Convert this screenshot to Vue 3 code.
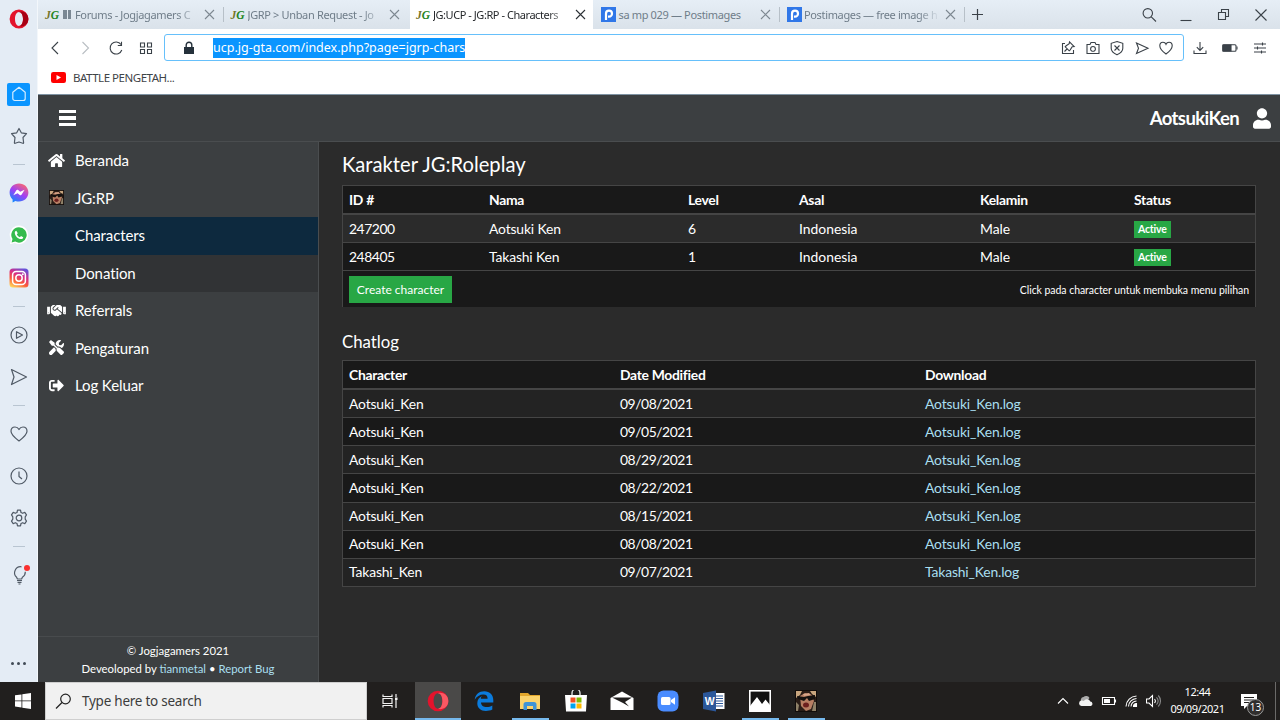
<template>
  <div class="desktop">
    <div class="browser">
      <!-- Opera sidebar -->
      <aside class="rail">
        <div class="rail-logo">
          <svg width="20" height="20" viewBox="0 0 20 20">
            <path fill="#e3132c" fill-rule="evenodd" d="M10 .6a9.400 9.400 0 1 0 0 18.800A9.400 9.400 0 0 0 10 .6zM10 3c2.400 0 4 3 4 7s-1.600 7-4 7-4-3-4-7 1.600-7 4-7z" />
            <path fill="#a70014" d="M10 3c2.400 0 4 3 4 7s-1.600 7-4 7c3.500 1.400 9.400-1 9.400-7S13.500 1.600 10 3z" />
          </svg>
        </div>
        <template v-for="(r, i) in rail" :key="i">
          <div v-if="r === '-'" class="rail-sep"></div>
          <div v-else class="rail-cell">
            <span v-if="r === 'home'" class="rail-home">
              <svg width="16" height="16" viewBox="0 0 16 16" class="line"><path :d="icons.home" /></svg>
            </span>
            <svg v-else-if="r === 'messenger'" width="20" height="20" viewBox="0 0 20 20">
              <defs>
                <linearGradient id="msg" x1="0.2" y1="1" x2="0.8" y2="0">
                  <stop offset="0" stop-color="#0a8cff" /><stop offset="0.5" stop-color="#a040f5" /><stop offset="1" stop-color="#ff6a68" />
                </linearGradient>
              </defs>
              <path fill="url(#msg)" d="M10 .5C4.600 .5 .6 4.400 .6 9.600c0 2.800 1.100 5.100 3 6.800v3l2.800-1.500c1.100.4 2.300.6 3.600.6 5.400 0 9.400-3.900 9.400-9S15.400 .5 10 .5z" />
              <path fill="#fff" d="M4.300 12.200 7.200 7.500c.5-.7 1.300-.8 2-.4l2 1.600 4.400-2-2.900 4.800c-.5.7-1.300.8-2 .4l-2.100-1.600z" />
            </svg>
            <svg v-else-if="r === 'whatsapp'" width="20" height="20" viewBox="0 0 20 20">
              <path fill="#fff" d="M10 .6a9.200 9.200 0 0 0-8 13.800L.9 19.200l4.900-1.200A9.200 9.200 0 1 0 10 .6z" />
              <path fill="#35bb4e" d="M10 2.200a7.700 7.700 0 0 0-6.500 11.800l-.9 3.500 3.600-.9A7.700 7.700 0 1 0 10 2.200z" />
              <path fill="#fff" d="M7.300 5.700c-.9 0-1.600 1-1.500 2.200.3 3.200 3.200 6 6.200 6.200 1.100 0 2.300-.7 2.200-1.900l-2.200-1.100-1.100 1.200c-1.500-.6-2.500-1.600-3.100-3l1-1.100z" />
            </svg>
            <svg v-else-if="r === 'instagram'" width="20" height="20" viewBox="0 0 20 20">
              <defs>
                <linearGradient id="ig" x1="0.2" y1="1" x2="0.7" y2="0">
                  <stop offset="0" stop-color="#ffd35a" /><stop offset="0.35" stop-color="#fa5a38" /><stop offset="0.65" stop-color="#d82d86" /><stop offset="1" stop-color="#6552d8" />
                </linearGradient>
              </defs>
              <rect x="0.5" y="0.5" width="19" height="19" rx="3.5" fill="url(#ig)" />
              <g fill="none" stroke="#fff" stroke-width="1.5">
                <rect x="3.6" y="3.6" width="12.8" height="12.8" rx="3.5" /><circle cx="10" cy="10" r="3.2" />
              </g>
              <circle cx="13.8" cy="6.2" r="1" fill="#fff" />
            </svg>
            <svg v-else width="18" height="18" viewBox="0 0 18 18" class="line"><path :d="icons[r]" /></svg>
            <i v-if="r === 'bulb'" class="rail-dot"></i>
          </div>
        </template>
        <div class="rail-more"><i></i><i></i><i></i></div>
      </aside>

      <div class="window">
        <!-- Tabs -->
        <div class="tabs">
          <div v-for="(t, i) in tabs" :key="i" class="tab" :class="{ active: t.active, sep: t.sep }">
            <span v-if="t.icon === 'jg'" class="fav-jg"><i>J</i><b>G</b></span>
            <svg v-else class="fav-p" width="15" height="15" viewBox="0 0 15 15">
              <rect width="15" height="15" fill="#3077e8" />
              <path d="M5 13V6.700a3 3 0 1 1 3 3H7" fill="none" stroke="#fff" stroke-width="2.2" />
            </svg>
            <span v-if="t.paused" class="bars"><i></i><i></i></span>
            <span class="tab-title" :class="{ fade: t.fade }">{{ t.title }}</span>
            <svg class="tab-x" width="11" height="11" viewBox="0 0 11 11"><path d="M1 1l9 9M10 1l-9 9" /></svg>
          </div>
          <svg class="tab-add" width="11" height="11" viewBox="0 0 11 11"><path d="M5.500 0v11M0 5.500h11" /></svg>
          <div class="win-ctl">
            <svg width="16" height="16" viewBox="0 0 16 16"><circle cx="6.8" cy="6.3" r="4.7" /><path d="M10.300 9.800 15 14.500" /></svg>
            <svg width="16" height="16" viewBox="0 0 16 16"><path d="M2.500 13.500h11" /></svg>
            <svg width="16" height="16" viewBox="0 0 16 16"><path d="M2.500 5.500h7v7h-7zM5.500 5.500v-3h7v7h-3" /></svg>
            <svg width="16" height="16" viewBox="0 0 16 16"><path d="M2.500 2.500l11 11M13.500 2.500l-11 11" /></svg>
          </div>
        </div>

        <!-- Address row -->
        <div class="nav">
          <div class="nav-left">
            <svg width="16" height="16" viewBox="0 0 16 16"><path d="M11 2 5 8l6 6" /></svg>
            <svg class="off" width="16" height="16" viewBox="0 0 16 16"><path d="M5.500 2l6 6-6 6" /></svg>
            <svg width="16" height="16" viewBox="0 0 16 16"><path d="M13 4.500A6 6 0 1 0 13.800 10M13.500 1.800v3.700H9.800" /></svg>
            <svg width="16" height="16" viewBox="0 0 16 16"><path d="M2.500 3h4v4h-4zM9.500 3h4v4h-4zM2.500 9.500h4v4h-4zM9.500 9.500h4v4h-4z" /></svg>
          </div>
          <div class="url">
            <svg class="lock" width="12" height="14" viewBox="0 0 12 14">
              <path d="M1 6h10v7H1z" fill="#25313b" /><path d="M3.200 6.500V4a2.800 2.800 0 0 1 5.600 0v2.500" fill="none" stroke="#25313b" stroke-width="1.4" />
            </svg>
            <span class="url-text">ucp.jg-gta.com/index.php?page=jgrp-chars</span>
            <div class="url-icons">
              <svg v-for="u in urlIcons" :key="u" width="16" height="16" viewBox="0 0 16 16"><path :d="icons[u]" /></svg>
            </div>
          </div>
          <div class="nav-right">
            <svg width="16" height="16" viewBox="0 0 16 16"><path d="M8 2v8M4.800 7.200 8 10.400l3.200-3.200M2 10.500v3h12v-3" /></svg>
            <svg width="16" height="16" viewBox="0 0 16 16"><rect x="0.8" y="4.8" width="13.2" height="6.5" rx="1" /><path d="M1 5h8v6H1z" fill="#3a4148" /><path d="M15 6.500v3" /></svg>
            <svg width="16" height="16" viewBox="0 0 16 16"><path d="M2 4h12M2 8h12M2 12h12M10.500 2.500v3M5.500 6.500v3M9.500 10.500v3" /></svg>
          </div>
        </div>
        <div class="bookmarks">
          <svg width="15" height="11" viewBox="0 0 15 11"><rect width="15" height="11" rx="2.2" fill="#f00" /><path d="M5.500 3v5l4.500-2.500z" fill="#fff" /></svg>
          <span>BATTLE PENGETAH...</span>
        </div>

        <!-- Page -->
        <div class="page">
          <header class="topbar">
            <div class="burger"><i></i><i></i><i></i></div>
            <div class="user">
              <span>AotsukiKen</span>
              <svg width="18" height="21" viewBox="0 0 448 512"><path :d="fa.user" fill="#fff" /></svg>
            </div>
          </header>
          <div class="body">
            <nav class="side">
              <div v-for="m in menu" :key="m.label" class="side-item" :class="m.cls">
                <span class="side-icon">
                  <svg v-if="m.icon" :width="m.w" :height="m.h" :viewBox="m.vb"><path :d="fa[m.icon]" fill="#fff" /></svg>
                  <svg v-else-if="m.pic" width="15" height="15" viewBox="0 0 22 22"><use href="#sa-face" /></svg>
                </span>
                <span>{{ m.label }}</span>
              </div>
              <div class="side-foot">
                <div>© Jogjagamers 2021</div>
                <div>Deveoloped by <a>tianmetal</a> • <a>Report Bug</a></div>
              </div>
            </nav>
            <main class="main">
              <h1>Karakter JG:Roleplay</h1>
              <table class="tbl chars">
                <colgroup><col v-for="(w, i) in charCols" :key="i" :style="{ width: w + 'px' }" /></colgroup>
                <thead>
                  <tr><th v-for="h in ['ID #', 'Nama', 'Level', 'Asal', 'Kelamin', 'Status']" :key="h">{{ h }}</th></tr>
                </thead>
                <tbody>
                  <tr v-for="c in chars" :key="c.id">
                    <td class="num">{{ c.id }}</td>
                    <td>{{ c.name }}</td>
                    <td>{{ c.level }}</td>
                    <td class="wide">Indonesia</td>
                    <td class="wide">Male</td>
                    <td><span class="badge">Active</span></td>
                  </tr>
                </tbody>
                <tfoot>
                  <tr>
                    <td colspan="6">
                      <div class="foot-row">
                        <button class="btn">Create character</button>
                        <small>Click pada character untuk membuka menu pilihan</small>
                      </div>
                    </td>
                  </tr>
                </tfoot>
              </table>
              <h2>Chatlog</h2>
              <table class="tbl logs">
                <colgroup><col v-for="(w, i) in logCols" :key="i" :style="{ width: w + 'px' }" /></colgroup>
                <thead>
                  <tr><th>Character</th><th>Date Modified</th><th>Download</th></tr>
                </thead>
                <tbody>
                  <tr v-for="l in logs" :key="l.date">
                    <td>{{ l.name }}</td>
                    <td class="num">{{ l.date }}</td>
                    <td><a>{{ l.name }}.log</a></td>
                  </tr>
                </tbody>
              </table>
            </main>
          </div>
        </div>
      </div>
    </div>

    <!-- Taskbar -->
    <footer class="taskbar">
      <div class="start">
        <svg width="16" height="16" viewBox="0 0 16 16"><path fill="#fff" d="M0 2.300 6.500 1.400v6.100H0zM7.300 1.300 16 0v7.500H7.300zM0 8.300h6.500v6.200L0 13.600zM7.300 8.300H16V16l-8.700-1.300z" /></svg>
      </div>
      <div class="search">
        <svg width="17" height="17" viewBox="0 0 17 17"><circle cx="10.5" cy="6" r="4.8" /><path d="M7 9.500 1 15.500" /></svg>
        <span>Type here to search</span>
      </div>
      <div class="task view">
        <svg width="18" height="18" viewBox="0 0 18 18" fill="none" stroke="#f2f2f2" stroke-width="1.2">
          <path d="M2 2.500v2h9v-2M2 6.500h9v5H2zM2 15.500v-2h9v2M15 2v3M15 8v8" /><path d="M14 5.500h2.500v2.500H14z" fill="#f2f2f2" stroke="none" />
        </svg>
      </div>
      <div class="task on lit">
        <svg width="22" height="22" viewBox="0 0 20 20">
          <path fill="#e3132c" fill-rule="evenodd" d="M10 .6a9.400 9.400 0 1 0 0 18.800A9.400 9.400 0 0 0 10 .6zM10 3c2.400 0 4 3 4 7s-1.600 7-4 7-4-3-4-7 1.600-7 4-7z" />
          <path fill="#fb5863" d="M10 3c2.400 0 4 3 4 7s-1.600 7-4 7c3.500 1.400 9.400-1 9.400-7S13.500 1.600 10 3z" />
        </svg>
      </div>
      <div class="task">
        <svg width="20" height="20" viewBox="0 0 20 20"><path fill="#0b7bdc" d="M.7 8.800C1.300 3.500 5 .3 10.300.3c5.500 0 9 3.700 9 8.800v2.400H7c.2 3.300 2.600 4.600 5.600 4.600 2.200 0 4-.6 5.700-1.600v4c-1.900 1-4 1.400-6.400 1.400-5.300 0-8.600-3-8.600-7.700 0-3.500 1.900-6 4.900-7.200C7 6 6.900 6.700 6.900 7.700h6.700c.1-2.600-1.200-4.200-4.300-4.200C5.800 3.500 2.600 5.500.7 8.800z" /></svg>
      </div>
      <div class="task on">
        <svg width="20" height="19" viewBox="0 0 20 19">
          <path fill="#e3a72c" d="M0 1h8l2 2h10v3H0z" /><path fill="#fbd36c" d="M0 4h20v13H0z" />
          <path fill="#3f93d6" d="M3.500 18v-5.500a2.500 2.500 0 0 1 2.500-2.500h8a2.500 2.500 0 0 1 2.500 2.500V18H13v-4H7v4z" />
        </svg>
      </div>
      <div class="task">
        <svg width="22" height="22" viewBox="0 0 22 22">
          <path d="M7 6V3a3 3 0 0 1 8 0v3" fill="none" stroke="#ddd" stroke-width="1.4" /><path fill="#fff" d="M0 5h22l-1 16.500H1z" />
          <path fill="#f25022" d="M5.500 7.500h5v5h-5z" /><path fill="#7fba00" d="M11.500 7.500h5v5h-5z" />
          <path fill="#00a4ef" d="M5.500 13.500h5v5h-5z" /><path fill="#ffb900" d="M11.500 13.500h5v5h-5z" />
        </svg>
      </div>
      <div class="task">
        <svg width="24" height="20" viewBox="0 0 24 20"><path fill="#fff" d="M.5 7 12 .5 23.500 7v12H.5z" /><path fill="#211f1e" d="M2 6.500h20L15 11l4 4.500-6-3.500z" /></svg>
      </div>
      <div class="task">
        <svg width="22" height="22" viewBox="0 0 22 22"><rect x="0.5" y="0.5" width="21" height="21" rx="6" fill="#4a8cff" /><rect x="4" y="7" width="9.5" height="8" rx="1.5" fill="#fff" /><path fill="#fff" d="M14 10l4-2.700v7.400L14 12z" /></svg>
      </div>
      <div class="task">
        <svg width="22" height="22" viewBox="0 0 22 22">
          <path fill="#fff" d="M11 3h10.500v16H11z" /><path d="M13 6h7M13 8.500h7M13 11h7M13 13.500h7M13 16h7" stroke="#2b579a" stroke-width="1.2" />
          <path fill="#2b579a" d="M0 3 13 .5v21L0 19z" />
          <text x="1.8" y="15" fill="#fff" font-size="10.5" font-weight="700" font-family="Liberation Sans, sans-serif">W</text>
        </svg>
      </div>
      <div class="task on">
        <svg width="22" height="22" viewBox="0 0 22 22"><rect x="0.8" y="0.8" width="20.4" height="20.4" fill="#111" stroke="#fff" stroke-width="1.6" /><path fill="#fff" d="M1 20V16l7-9 5 7 3.500-4.500L21 15v6H1z" /></svg>
      </div>
      <div class="task on">
        <svg width="22" height="22" viewBox="0 0 22 22">
          <g id="sa-face">
            <rect width="22" height="22" fill="#2a1d17" />
            <path fill="#c8a57e" d="M1 1h6l-2 4-4 3zM15 1h6v6l-4-3z" />
            <path fill="#b77e63" d="M5 6l5-3 7 2 2 6-3 8-5 2-5-5z" />
            <path fill="#15110f" d="M2 6l7 1 4-1 7-1v4l-6 2-2-3-3 3-6-2z" />
            <path fill="#d7a588" d="M8 4l6-1 2 2-7 1z" /><ellipse cx="11" cy="15" rx="3" ry="2.5" fill="#6c1f1e" />
            <path fill="#8f8168" d="M1 12l3 3-1 6H1zM19 12h2v9h-4z" />
            <rect x="0.5" y="0.5" width="21" height="21" fill="none" stroke="#120d0b" />
          </g>
        </svg>
      </div>
      <div class="tray">
        <svg width="16" height="16" viewBox="0 0 16 16" class="tl"><path d="M3 10.500 8 5.500l5 5" /></svg>
        <svg width="16" height="16" viewBox="0 0 16 16"><path fill="#aaa" d="M3.500 9a3 3 0 0 1 2-5 4 4 0 0 1 6 1L8 9z" /><path fill="#f2f2f2" d="M3.500 13a2.800 2.800 0 0 1-.3-5.500c1-.3 2 0 2.600.6a3.600 3.600 0 0 1 6.500.3 2.400 2.400 0 0 1 .7 4.600z" /></svg>
        <svg width="16" height="16" viewBox="0 0 16 16" class="tl"><path d="M1.500 4.500h12v7h-12zM14.500 6.500v3" /><path d="M3 6h6v4H3z" fill="#fff" stroke="none" /></svg>
        <svg width="16" height="16" viewBox="0 0 16 16" class="tl"><path d="M3 13.500A11 11 0 0 1 13.500 3M5.500 13.500a8.500 8.500 0 0 1 8-8M8 13.500A6 6 0 0 1 13.500 8" /><path d="M10.500 13.500a3 3 0 0 1 3-3v3z" fill="#fff" /></svg>
        <svg width="16" height="16" viewBox="0 0 16 16" class="tl"><path d="M.5 6v4H3l3.500 3.500v-11L3 6zM8.500 6a3 3 0 0 1 0 4" /><path d="M10.500 4.300a5 5 0 0 1 0 7.400M12.300 2.500a8 8 0 0 1 0 11" stroke="#8a8a8a" /></svg>
      </div>
      <div class="clock"><span>12:44</span><span>09/09/2021</span></div>
      <div class="notes">
        <svg width="16" height="16" viewBox="0 0 16 16"><path fill="#fff" d="M0 1h16v12H6l-3 3v-3H0z" /><path d="M3 4.500h10M3 7h10M3 9.500h6" stroke="#211f1e" stroke-width="1.1" /></svg>
        <span class="count">13</span>
      </div>
    </footer>
  </div>
</template>

<script setup>
const rail = ['home', 'star', '-', 'messenger', 'whatsapp', 'instagram', '-', 'play', 'plane', '-', 'heart', 'clock', 'gear', '-', 'bulb']

const tabs = [
  { icon: 'jg', title: 'Forums - Jogjagamers C', paused: true, sep: true, fade: true },
  { icon: 'jg', title: 'JGRP > Unban Request - Jo', fade: true },
  { icon: 'jg', title: 'JG:UCP - JG:RP - Characters', active: true, fade: true },
  { icon: 'p', title: 'sa mp 029 — Postimages', sep: true },
  { icon: 'p', title: 'Postimages — free image h', sep: true, fade: true },
]

const urlIcons = ['pin', 'camera', 'shield', 'send', 'like']

const icons = {
  home: 'M1.800 6.300 8 1.300l6.200 5v6.200a2 2 0 0 1-2 2H3.800a2 2 0 0 1-2-2z',
  star: 'M9 1.500l2.300 4.300 5.200.9-3.500 3.800.6 5.200c0 .5-.3.8-.8.6L9 15l-3.800 1.300c-.5.2-.8-.1-.8-.6l.6-5.200L1.500 6.700l5.200-.9z',
  play: 'M9 1a8 8 0 1 0 0 16A8 8 0 0 0 9 1zM6.500 5.700v6.600l6-3.300z',
  plane: 'M1.500 1.500 16.500 9l-15 7.500L4 9z',
  heart: 'M9 16C5 13 1 9.800 1 6.300 1 3.500 2.800 2 5 2c1.800 0 3.200 1 4 2.500C9.800 3 11.200 2 13 2c2.200 0 4 1.500 4 4.300C17 9.800 13 13 9 16z',
  clock: 'M9 1a8 8 0 1 0 0 16A8 8 0 0 0 9 1zM9 4.500V9.500l3 2.500',
  gear: 'M7.500 1.200h3l.5 2.300 1.700.8 2.100-1 1.700 2.600-1.300 1.900v2.400l1.300 1.900-1.700 2.600-2.100-1-1.700.8-.5 2.300h-3L7 14.500l-1.700-.8-2.100 1-1.700-2.600 1.300-1.900V7.800L1.500 5.900l1.700-2.600 2.100 1L7 3.500zM9 6.200a2.800 2.800 0 1 0 0 5.600 2.800 2.800 0 0 0 0-5.600z',
  bulb: 'M11.500 .8A6 6 0 0 0 6.600 11.200l.8 1.800h4.200l.8-1.800A6 6 0 0 0 15.300 5.800M7 14.500h5M7.500 16.300h4M8.500 18h2',
  pin: 'M5 3.500H2.500v10h11V10M4.500 11.500l3-3M9.500 1.800l4.700 4.700-2 .3-2 3-1 1-4-4 1-1 3-2z',
  camera: 'M2 4.500h3l1-2h4l1 2h3v9H2zM8 6.500a2.400 2.400 0 1 0 0 4.800 2.400 2.400 0 0 0 0-4.800z',
  shield: 'M8 1.500l5.800 1.800v5C13.800 11 11.500 13.300 8 14.800 4.500 13.300 2.200 11 2.200 8.300v-5zM5.500 5.500l5 5M10.500 5.500l-5 5',
  send: 'M2.500 3 14 8.200 2.500 13.500 4.500 8.200z',
  like: 'M8 14C4.500 11.500 1.800 9 1.800 5.800 1.800 3.500 3.300 2.200 5 2.200c1.400 0 2.500.8 3 2 .5-1.200 1.600-2 3-2 1.700 0 3.200 1.300 3.200 3.600C14.200 9 11.500 11.500 8 14z',
}

const fa = {
  user: 'M224 256c70.700 0 128-57.300 128-128S294.700 0 224 0 96 57.300 96 128s57.300 128 128 128zm89.600 32h-16.700c-22.200 10.200-46.900 16-72.900 16s-50.600-5.800-72.900-16h-16.700C60.200 288 0 348.200 0 422.400V464c0 26.500 21.500 48 48 48h352c26.500 0 48-21.500 48-48v-41.600c0-74.200-60.200-134.400-134.400-134.400z',
  home: 'M280.370 148.260L96 300.110V464a16 16 0 0 0 16 16l112.060-.29a16 16 0 0 0 15.920-16V368a16 16 0 0 1 16-16h64a16 16 0 0 1 16 16v95.640a16 16 0 0 0 16 16.050L464 480a16 16 0 0 0 16-16V300L295.670 148.260a12.190 12.190 0 0 0-15.300 0zM571.600 251.470L488 182.560V44.050a12 12 0 0 0-12-12h-56a12 12 0 0 0-12 12v72.610L318.470 43a48 48 0 0 0-61 0L4.340 251.470a12 12 0 0 0-1.600 16.900l25.500 31A12 12 0 0 0 45.150 301l235.220-193.740a12.190 12.190 0 0 1 15.300 0L530.900 301a12 12 0 0 0 16.900-1.600l25.500-31a12 12 0 0 0-1.700-16.930z',
  shake: 'M434.700 64h-85.900c-8 0-15.700 3-21.600 8.400l-98.300 90c-.1.1-.2.3-.3.4-16.600 15.600-16.300 40.500-2.100 56 12.700 13.900 39.400 17.600 56.100 2.700.1-.1.3-.1.4-.2l79.900-73.200c6.500-5.900 16.700-5.500 22.600 1 6 6.500 5.500 16.600-1 22.600l-26.100 23.900L504 313.800c2.900 2.400 5.500 5 7.900 7.700V128l-54.600-54.600c-5.900-6-14.100-9.400-22.600-9.400zM544 128.200v223.900c0 17.700 14.300 32 32 32h64V128.200h-96zm48 223.900c-8.800 0-16-7.200-16-16s7.200-16 16-16 16 7.200 16 16-7.200 16-16 16zM0 384h64c17.700 0 32-14.300 32-32V128.200H0V384zm48-63.900c8.800 0 16 7.200 16 16s-7.200 16-16 16-16-7.200-16-16c0-8.900 7.200-16 16-16zm435.900 18.600L334.600 217.500l-30 27.500c-29.700 27.100-75.200 24.500-101.700-4.400-26.900-29.400-24.800-74.900 4.400-101.700L289.100 64h-83.800c-8.500 0-16.600 3.400-22.600 9.400L128 128v223.900h18.300l90.500 81.900c27.400 22.300 67.700 18.100 90-9.300l.2-.2 17.900 15.500c15.900 13 39.400 10.500 52.300-5.400l31.400-38.600 5.400 4.400c13.700 11.100 33.900 9.100 45-4.700l9.500-11.700c11.200-13.800 9.100-33.900-4.600-45.100z',
  tools: 'M501.100 395.700L384 278.600c-23.100-23.100-57.600-27.600-85.400-13.900L192 158.100V96L64 0 0 64l96 128h62.100l106.600 106.600c-13.600 27.800-9.200 62.300 13.900 85.400l117.100 117.100c14.600 14.600 38.200 14.600 52.700 0l52.700-52.700c14.500-14.600 14.500-38.200 0-52.700zM331.700 225c28.300 0 54.900 11 74.900 31l19.400 19.400c15.800-6.900 30.800-16.500 43.800-29.500 37.100-37.100 49.700-89.300 37.900-136.700-2.200-9-13.500-12.100-20.100-5.500l-74.400 74.400-67.900-11.300L334 98.900l74.400-74.400c6.600-6.600 3.400-17.900-5.700-20.200-47.400-11.700-99.600.9-136.600 37.900-28.500 28.500-41.900 66.100-41.200 103.600l82.100 82.100c8.100-1.900 16.500-2.900 24.700-2.900zm-103.900 82l-56.700-56.700L18.700 402.800c-25 25-25 65.500 0 90.500s65.500 25 90.500 0l123.600-123.600c-7.600-19.900-9.900-41.600-5-62.700z',
  exit: 'M497 273L329 441c-15 15-41 4.500-41-17v-96H152c-13.300 0-24-10.700-24-24v-96c0-13.300 10.700-24 24-24h136V88c0-21.400 25.900-32 41-17l168 168c9.300 9.400 9.300 24.600 0 34zM192 436v-40c0-6.600-5.400-12-12-12H96c-17.700 0-32-14.300-32-32V160c0-17.700 14.300-32 32-32h84c6.600 0 12-5.400 12-12V76c0-6.600-5.400-12-12-12H96c-53 0-96 43-96 96v192c0 53 43 96 96 96h84c6.600 0 12-5.400 12-12z',
}

const menu = [
  { label: 'Beranda', icon: 'home', w: 17, h: 15, vb: '0 0 576 512' },
  { label: 'JG:RP', pic: true },
  { label: 'Characters', cls: 'current' },
  { label: 'Donation', cls: 'sub' },
  { label: 'Referrals', icon: 'shake', w: 19, h: 15, vb: '0 0 640 512' },
  { label: 'Pengaturan', icon: 'tools', w: 15, h: 15, vb: '0 0 512 512' },
  { label: 'Log Keluar', icon: 'exit', w: 15, h: 15, vb: '0 0 512 512' },
]

const charCols = [140, 199, 111, 181, 154, 127]
const chars = [
  { id: 247200, name: 'Aotsuki Ken', level: 6 },
  { id: 248405, name: 'Takashi Ken', level: 1 },
]

const logCols = [271, 305, 336]
const logs = [
  { name: 'Aotsuki_Ken', date: '09/08/2021' },
  { name: 'Aotsuki_Ken', date: '09/05/2021' },
  { name: 'Aotsuki_Ken', date: '08/29/2021' },
  { name: 'Aotsuki_Ken', date: '08/22/2021' },
  { name: 'Aotsuki_Ken', date: '08/15/2021' },
  { name: 'Aotsuki_Ken', date: '08/08/2021' },
  { name: 'Takashi_Ken', date: '09/07/2021' },
]
</script>

<style>
html, body { margin: 0; background: #2b2b2b; overflow: hidden; }
</style>

<style scoped>
* { box-sizing: border-box; }
svg { flex-shrink: 0; display: block; }
.desktop {
  width: 1280px;
  height: 720px;
  display: flex;
  flex-direction: column;
  overflow: hidden;
  font-family: 'Noto Sans', 'Open Sans', sans-serif;
}
.browser { height: 682px; display: flex; }
.window { flex: 1; min-width: 0; display: flex; flex-direction: column; }

/* Opera sidebar */
.rail {
  width: 38px;
  background: #e4ecf5;
  border-right: 1px solid #f3f7fb;
  display: flex;
  flex-direction: column;
  align-items: center;
  flex-shrink: 0;
}
.rail-logo { height: 73px; padding-top: 9px; }
.rail-cell { position: relative; width: 36px; height: 42.2px; display: flex; align-items: center; justify-content: center; flex-shrink: 0; }
.rail-home { width: 23px; height: 23px; border-radius: 2px; background: #0a95ff; display: flex; align-items: center; justify-content: center; }
.line { fill: none; stroke: #505a66; stroke-width: 1.2; stroke-linejoin: round; overflow: visible; }
.rail-home .line { stroke: #d5edff; }
.rail-sep { height: 14.8px; width: 12px; flex-shrink: 0; display: flex; align-items: center; }
.rail-sep::after { content: ''; width: 12px; height: 1px; background: #b9c5d1; }
.rail-dot { position: absolute; left: 23px; top: 11px; width: 6px; height: 6px; border-radius: 50%; background: #fb3030; }
.rail-more { margin-top: auto; margin-bottom: 17px; display: flex; gap: 3px; }
.rail-more i { width: 3px; height: 3px; border-radius: 50%; background: #414b56; }

/* Tabs */
.tabs { height: 29px; display: flex; align-items: center; background: linear-gradient(#e6eef6, #dae2ea); }
.tab {
  width: 185.5px;
  height: 29px;
  padding: 0 9px 0 7px;
  display: flex;
  align-items: center;
  position: relative;
  flex-shrink: 0;
  color: #6f7d89;
  font-size: 11px;
}
.tab.active { color: #26292c; background: #fff; width: 183px; margin-left: 1px; margin-right: 1px; padding-left: 6px; padding-right: 7px; }
.tab.sep::after { content: ''; position: absolute; right: 0; top: 7px; width: 1px; height: 15px; background: #b7c0c8; }
.fav-jg { width: 17px; display: flex; font-family: 'Liberation Serif', serif; font-size: 11.5px; font-style: italic; line-height: 14px; font-weight: 700; flex-shrink: 0; }
.fav-jg i { color: #75752a; }
.fav-jg b { color: #238523; }
.fav-p { margin-right: 2.5px; }
.bars { display: flex; gap: 1px; margin: 0 4px 0 1px; }
.bars i { width: 3.5px; height: 9px; background: #7a8793; }
.tab-title { flex: 1; min-width: 0; white-space: nowrap; letter-spacing: -0.35px; }
.tab-title.fade { mask-image: linear-gradient(90deg, #000 calc(100% - 22px), transparent); }
.active .tab-title { letter-spacing: -0.45px; }
.tab-x { margin-left: 5px; fill: none; stroke: #7d8891; stroke-width: 1.1; }
.active .tab-x { stroke: #2c3136; }
.tab-add { margin-left: 7px; fill: none; stroke: #3a4148; stroke-width: 1.2; }
.win-ctl { margin-left: auto; display: flex; gap: 21.4px; padding-right: 11px; }
.win-ctl svg { fill: none; stroke: #3a4148; stroke-width: 1.1; }

/* Address row */
.nav { height: 37px; display: flex; align-items: center; background: #fff; }
.nav svg { fill: none; stroke: #3a4148; stroke-width: 1.1; }
.nav-left { display: flex; gap: 14.3px; padding-left: 9px; width: 126px; }
.nav-left .off { stroke: #b9bec3; }
.url {
  width: 1020px;
  height: 27px;
  border: 1.5px solid #66c0fb;
  border-radius: 3px;
  display: flex;
  align-items: center;
  padding: 0 9px 0 18px;
}
.nav .lock { stroke: none; }
.url-text { margin-left: 18px; background: #0a95ff; color: #fff; font-size: 12.5px; line-height: 20px; white-space: nowrap; }
.url-icons { margin-left: auto; display: flex; gap: 8.4px; }
.nav-right { margin-left: 8px; display: flex; gap: 14px; }
.bookmarks { height: 28px; padding: 0 0 5px 13px; display: flex; align-items: center; gap: 7px; background: #fff; font-size: 11.5px; color: #3f4448; }
.bookmarks span { letter-spacing: -0.48px; }

/* Page */
.page { flex: 1; display: flex; flex-direction: column; color: #fff; font-family: Lato, 'Noto Sans', sans-serif; }
.topbar {
  height: 48px;
  border-top: 1px solid #7f93a3;
  border-bottom: 1px solid #4a4d4f;
  background: #3c3f41;
  display: flex;
  align-items: center;
  justify-content: space-between;
  padding: 0 9px 0 20.5px;
}
.burger { display: flex; flex-direction: column; gap: 3px; }
.burger i { width: 17.5px; height: 3.4px; background: #fff; }
.user { display: flex; align-items: center; gap: 14px; font-size: 18.5px; font-weight: 700; letter-spacing: -0.6px; }
.body { flex: 1; display: flex; }
.side { width: 281px; flex-shrink: 0; background: #3c3f41; border-right: 1px solid #4a4d4f; display: flex; flex-direction: column; }
.side-item { height: 37.5px; padding-bottom: 1px; display: flex; align-items: center; font-size: 15px; letter-spacing: -0.1px; flex-shrink: 0; }
.side-item.current { background: #0d293e; }
.side-item.sub { background: #313335; }
.side-icon { width: 37px; display: flex; justify-content: center; }
.side-foot {
  margin-top: auto;
  height: 46px;
  border-top: 1px solid #484b4d;
  text-align: center;
  font-size: 11.35px;
  line-height: 18px;
  padding-top: 5px;
}
a { color: #a9dff0; }

.main { flex: 1; min-width: 0; background: #2b2b2b; padding: 0 23px; }
h1, h2 { margin: 0; font-weight: 400; white-space: nowrap; }
h1 { font-size: 20.2px; line-height: 24px; padding: 10px 0 9px; }
h2 { font-size: 16.8px; line-height: 22px; padding: 24px 0 7px; }
.tbl { width: 914px; table-layout: fixed; border-collapse: separate; border-spacing: 0; border: 1px solid #454545; font-size: 13.9px; letter-spacing: -0.15px; }
.tbl th, .tbl td { padding: 0 6px; height: 28.1px; line-height: 20px; text-align: left; border-top: 1px solid #454545; }
.tbl th { height: 28px; border-top: 0; border-bottom: 1px solid #454545; background: #191919; font-weight: 700; letter-spacing: -0.3px; }
.tbl .num { letter-spacing: -0.45px; }
.tbl .wide { letter-spacing: 0; }
.logs tbody tr:nth-child(odd) { background: #232323; }
.logs tbody tr:nth-child(even) { background: #191919; }
.chars tbody tr:nth-child(even), .chars tfoot { background: #191919; }
.chars { border-bottom: 0; }
.chars tfoot td { height: 37px; }
.badge { display: inline-block; background: #28a745; font-size: 10.5px; font-weight: 700; line-height: 17px; padding: 0 4px; vertical-align: 1px; letter-spacing: -0.2px; }
.foot-row { display: flex; align-items: center; justify-content: space-between; }
.btn { height: 27px; width: 103px; padding: 0; border: 0; background: #28a745; color: #fff; font-family: inherit; font-size: 12px; white-space: nowrap; }
.foot-row small { font-size: 10.5px; letter-spacing: -0.05px; padding-top: 2px; }

/* Taskbar */
.taskbar { height: 38px; background: #211f1e; display: flex; color: #fff; }
.start { width: 45px; display: flex; align-items: center; justify-content: center; }
.search {
  width: 322px;
  background: #f1f1f1;
  border: 1px solid #cfcfcf;
  display: flex;
  align-items: center;
  padding-left: 9px;
  gap: 10px;
  color: #3c3c3c;
  font-size: 13.5px;
}
.search svg { fill: none; stroke: #222; stroke-width: 1.2; }
.search span { letter-spacing: -0.25px; white-space: nowrap; }
.task { width: 46px; display: flex; align-items: center; justify-content: center; position: relative; flex-shrink: 0; }
.task.view { width: 47.5px; padding-right: 1.5px; }
.task.on::after { content: ''; position: absolute; left: 5px; right: 4px; bottom: 0; height: 2px; background: #76b9ed; }
.task.lit { background: #4a4948; }
.task.on.lit::after { left: 0; right: 0; }
.tray { margin-left: auto; display: flex; align-items: center; gap: 6.7px; }
.tl { fill: none; stroke: #fff; stroke-width: 1.1; }
.clock { width: 71px; display: flex; flex-direction: column; align-items: center; justify-content: center; font-size: 11px; line-height: 16.5px; letter-spacing: -0.45px; padding-bottom: 1px; }
.notes { width: 43px; margin-right: 4px; border-right: 1px solid #6b6a69; padding: 11px 0 0 8px; position: relative; }
.count {
  position: absolute;
  left: 14px;
  top: 17px;
  width: 17px;
  height: 17px;
  border-radius: 50%;
  border: 1px solid #999;
  background: #302e2d;
  font-size: 10px;
  line-height: 15px;
  text-align: center;
}
</style>
